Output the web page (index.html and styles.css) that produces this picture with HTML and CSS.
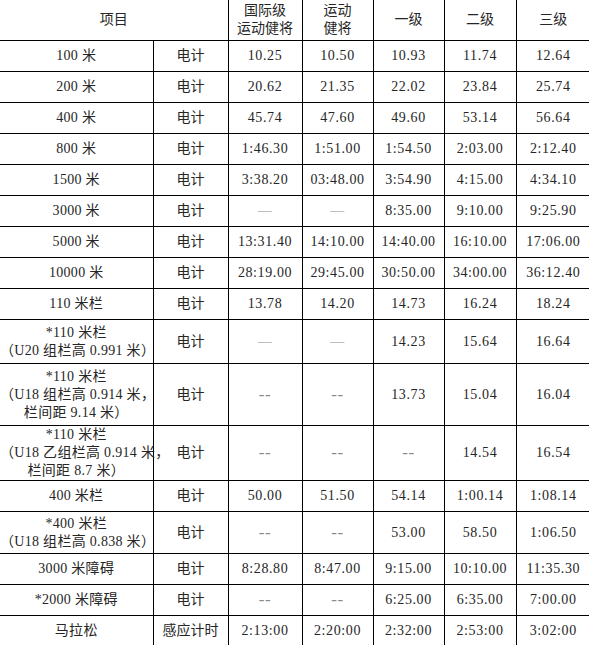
FILE: index.html
```html
<!DOCTYPE html>
<html lang="zh">
<head>
<meta charset="utf-8">
<title>田径等级标准</title>
<link rel="stylesheet" href="styles.css">
</head>
<body>
<table class="grid">
  <colgroup>
    <col class="c1"><col class="c2"><col class="c3"><col class="c4"><col class="c5"><col class="c6"><col class="c7">
  </colgroup>
  <tr class="h41">
    <td colspan="2">项目</td>
    <td>国际级<br>运动健将</td>
    <td>运动<br>健将</td>
    <td>一级</td>
    <td>二级</td>
    <td>三级</td>
  </tr>
  <tr class="h31"><td class="ev">100 米</td><td>电计</td><td class="v">10.25</td><td class="v">10.50</td><td class="v">10.93</td><td class="v">11.74</td><td class="v">12.64</td></tr>
  <tr class="h31"><td class="ev">200 米</td><td>电计</td><td class="v">20.62</td><td class="v">21.35</td><td class="v">22.02</td><td class="v">23.84</td><td class="v">25.74</td></tr>
  <tr class="h31"><td class="ev">400 米</td><td>电计</td><td class="v">45.74</td><td class="v">47.60</td><td class="v">49.60</td><td class="v">53.14</td><td class="v">56.64</td></tr>
  <tr class="h31"><td class="ev">800 米</td><td>电计</td><td class="v">1:46.30</td><td class="v">1:51.00</td><td class="v">1:54.50</td><td class="v">2:03.00</td><td class="v">2:12.40</td></tr>
  <tr class="h31"><td class="ev">1500 米</td><td>电计</td><td class="v">3:38.20</td><td class="v">03:48.00</td><td class="v">3:54.90</td><td class="v">4:15.00</td><td class="v">4:34.10</td></tr>
  <tr class="h31"><td class="ev">3000 米</td><td>电计</td><td class="v dash">—</td><td class="v dash">—</td><td class="v">8:35.00</td><td class="v">9:10.00</td><td class="v">9:25.90</td></tr>
  <tr class="h31"><td class="ev">5000 米</td><td>电计</td><td class="v">13:31.40</td><td class="v">14:10.00</td><td class="v">14:40.00</td><td class="v">16:10.00</td><td class="v">17:06.00</td></tr>
  <tr class="h31"><td class="ev">10000 米</td><td>电计</td><td class="v">28:19.00</td><td class="v">29:45.00</td><td class="v">30:50.00</td><td class="v">34:00.00</td><td class="v">36:12.40</td></tr>
  <tr class="h31"><td class="ev">110 米栏</td><td>电计</td><td class="v">13.78</td><td class="v">14.20</td><td class="v">14.73</td><td class="v">16.24</td><td class="v">18.24</td></tr>
  <tr class="h44"><td class="ev">*110 米栏<br>（U20 组栏高 0.991 米）</td><td>电计</td><td class="v dash">—</td><td class="v dash">—</td><td class="v">14.23</td><td class="v">15.64</td><td class="v">16.64</td></tr>
  <tr class="h62"><td class="ev">*110 米栏<br>（U18 组栏高 0.914 米，<br>栏间距 9.14 米）</td><td>电计</td><td class="v dd">--</td><td class="v dd">--</td><td class="v">13.73</td><td class="v">15.04</td><td class="v">16.04</td></tr>
  <tr class="h52"><td class="ev">*110 米栏<br>（U18 乙组栏高 0.914 米，<br>栏间距 8.7 米）</td><td>电计</td><td class="v dd">--</td><td class="v dd">--</td><td class="v dd">--</td><td class="v">14.54</td><td class="v">16.54</td></tr>
  <tr class="h31"><td class="ev">400 米栏</td><td>电计</td><td class="v">50.00</td><td class="v">51.50</td><td class="v">54.14</td><td class="v">1:00.14</td><td class="v">1:08.14</td></tr>
  <tr class="h42"><td class="ev">*400 米栏<br>（U18 组栏高 0.838 米）</td><td>电计</td><td class="v dd">--</td><td class="v dd">--</td><td class="v">53.00</td><td class="v">58.50</td><td class="v">1:06.50</td></tr>
  <tr class="h31"><td class="ev">3000 米障碍</td><td>电计</td><td class="v">8:28.80</td><td class="v">8:47.00</td><td class="v">9:15.00</td><td class="v">10:10.00</td><td class="v">11:35.30</td></tr>
  <tr class="h31"><td class="ev">*2000 米障碍</td><td>电计</td><td class="v dd">--</td><td class="v dd">--</td><td class="v">6:25.00</td><td class="v">6:35.00</td><td class="v">7:00.00</td></tr>
  <tr class="h31"><td class="ev">马拉松</td><td>感应计时</td><td class="v">2:13:00</td><td class="v">2:20:00</td><td class="v">2:32:00</td><td class="v">2:53:00</td><td class="v">3:02:00</td></tr>
</table>
</body>
</html>
```
FILE: styles.css
```css
html, body {
  margin: 0;
  padding: 0;
  background: #ffffff;
}

.grid {
  width: 589px;
  table-layout: fixed;
  border-collapse: collapse;
  font-family: "Liberation Serif", "Noto Sans CJK SC", serif;
  font-size: 14px;
  line-height: 18px;
  color: #262626;
}

.c1 { width: 153px; }
.c2 { width: 75px; }
.c3 { width: 74px; }
.c4 { width: 71px; }
.c5 { width: 71px; }
.c6 { width: 72px; }
.c7 { width: 74px; }

.grid td {
  border: 1px solid #000;
  padding: 0 2px;
  text-align: center;
  vertical-align: middle;
  white-space: nowrap;
  overflow: visible;
}

.grid tr:first-child td { border-top: none; }
.grid tr:last-child td { border-bottom: none; }
.grid td:first-child { border-left: none; }
.grid td:last-child { border-right: none; }

.grid td.ev {
  padding: 0;
  letter-spacing: 0.3px;
}

.v { letter-spacing: 0.6px; }

.dash { color: #8a8a8a; }

.grid td.dd {
  color: #8a8a8a;
  font-size: 17px;
  letter-spacing: 0.5px;
}

.h41 td { height: 40px; }
.h31 td { height: 30px; }
.h44 td { height: 43px; }
.h62 td { height: 61px; }
.h52 td { height: 51px; }
.h42 td { height: 41px; }
```
